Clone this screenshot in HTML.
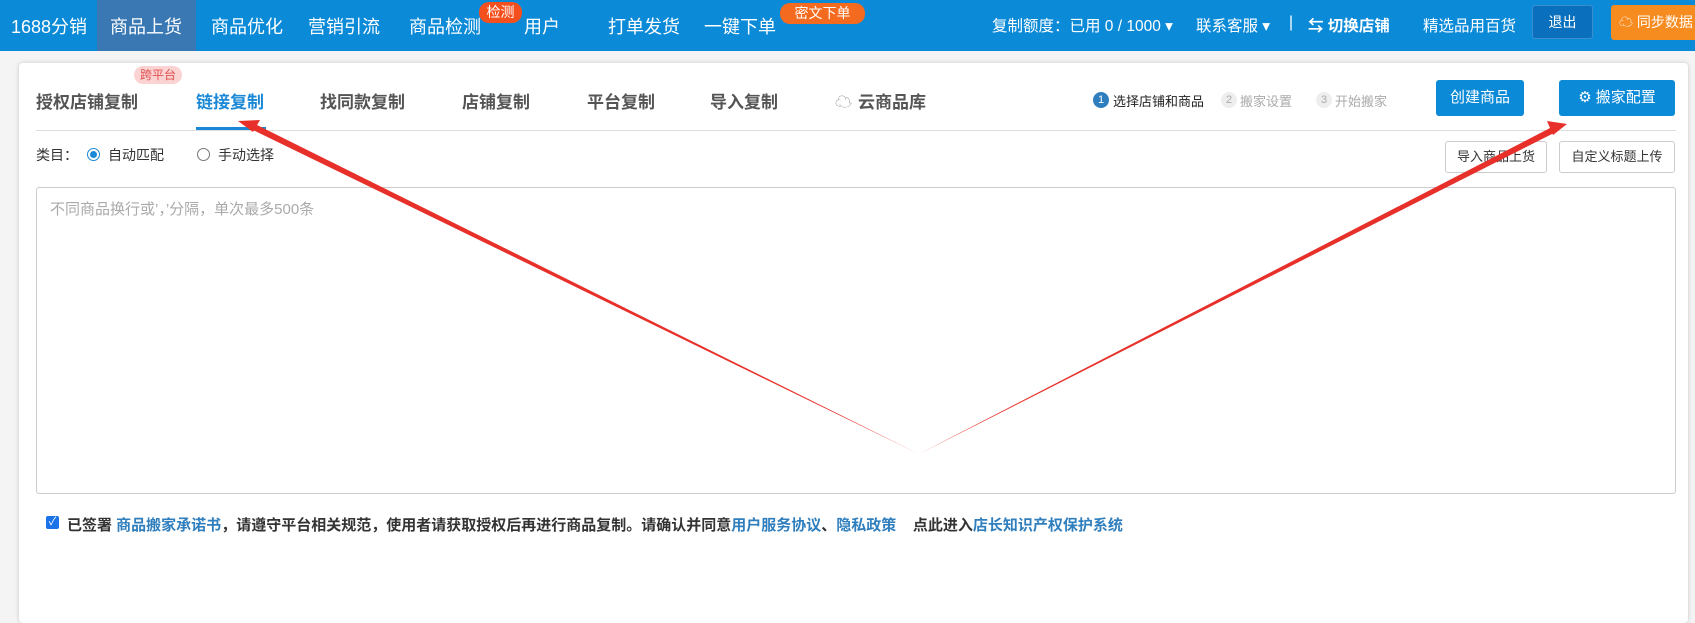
<!DOCTYPE html>
<html><head><meta charset="utf-8"><style>
*{margin:0;padding:0;box-sizing:border-box}
body{width:1695px;height:612px;overflow:hidden;background:#f4f4f4;font-family:"Liberation Sans","Noto Sans CJK SC",sans-serif;position:relative}
.a{position:absolute;white-space:nowrap}
.nav{position:absolute;left:0;top:0;width:1695px;height:51px;background:#0b8ad8}
.nv{position:absolute;top:13px;color:#fff;font-size:18px}
.rt{position:absolute;top:14px;color:#fff;font-size:15.5px}
.badge{position:absolute;background:#f4501e;color:#fff;font-size:14px;border-radius:10px;text-align:center;line-height:21px}
.card{position:absolute;left:19px;top:63px;width:1669px;height:560px;background:#fff;border-radius:4px;box-shadow:0 0 5px rgba(0,0,0,.18)}
.tab{position:absolute;top:88px;font-size:17px;font-weight:bold;color:#555}
.btn{position:absolute;background:#0b8ad8;color:#fff;font-size:15px;border-radius:3px;text-align:center}
.obtn{position:absolute;border:1px solid #ccc;background:#fff;color:#333;font-size:13px;border-radius:3px;text-align:center;line-height:30px}
.st{position:absolute;top:91px;font-size:13px}
.cir{position:absolute;top:92px;width:16px;height:16px;border-radius:50%;font-size:11px;text-align:center;line-height:16px}
.lk{color:#2f7ebd}
</style></head><body>
<div class="nav"></div>
<div class="a" style="left:97px;top:0;width:99px;height:51px;background:#3a78b3"></div>
<div class="nv" style="left:11px">1688分销</div>
<div class="nv" style="left:110px">商品上货</div>
<div class="nv" style="left:211px">商品优化</div>
<div class="nv" style="left:308px">营销引流</div>
<div class="nv" style="left:409px">商品检测</div>
<div class="badge" style="left:479px;top:2px;width:43px">检测</div>
<div class="nv" style="left:524px">用户</div>
<div class="nv" style="left:608px">打单发货</div>
<div class="nv" style="left:704px">一键下单</div>
<div class="badge" style="left:780px;top:3px;width:85px;background:#f46a1e">密文下单</div>
<div class="rt" style="left:992px">复制额度：已用 0 / 1000 ▾</div>
<div class="rt" style="left:1196px">联系客服 ▾</div>
<div class="rt" style="left:1289px">|</div>
<div class="rt" style="left:1308px;font-weight:bold">⇆ 切换店铺</div>
<div class="rt" style="left:1423px">精选品用百货</div>
<div class="a" style="left:1532px;top:5px;width:61px;height:34px;background:#0a70bd;border:1px solid #3b8fd0;border-radius:3px;color:#fff;font-size:14px;text-align:center;line-height:32px">退出</div>
<div class="a" style="left:1611px;top:5px;width:90px;height:35px;background:#f68b1f;border-radius:3px;color:#fff;font-size:14px;line-height:35px;padding-left:8px">☁ 同步数据</div>

<div class="card"></div>
<div class="a" style="left:134px;top:66px;width:48px;height:18px;background:#fbd3d3;color:#e05050;font-size:12px;border-radius:9px;text-align:center;line-height:18px">跨平台</div>
<div class="tab" style="left:36px">授权店铺复制</div>
<div class="tab" style="left:196px;color:#1a88d6">链接复制</div>
<div class="tab" style="left:320px">找同款复制</div>
<div class="tab" style="left:462px">店铺复制</div>
<div class="tab" style="left:587px">平台复制</div>
<div class="tab" style="left:710px">导入复制</div>
<div class="tab" style="left:835px;color:#999">☁</div>
<div class="tab" style="left:858px">云商品库</div>
<div class="a" style="left:36px;top:130px;width:1640px;height:1px;background:#ddd"></div>
<div class="a" style="left:196px;top:127px;width:70px;height:3px;background:#1a88d6"></div>
<div class="cir" style="left:1093px;background:#2f7ebd;color:#fff">1</div>
<div class="st" style="left:1113px;color:#222">选择店铺和商品</div>
<div class="cir" style="left:1221px;background:#eee;color:#aaa">2</div>
<div class="st" style="left:1240px;color:#aaa">搬家设置</div>
<div class="cir" style="left:1316px;background:#eee;color:#aaa">3</div>
<div class="st" style="left:1335px;color:#aaa">开始搬家</div>
<div class="btn" style="left:1436px;top:80px;width:88px;height:36px;line-height:36px">创建商品</div>
<div class="btn" style="left:1559px;top:80px;width:116px;height:36px;line-height:36px">⚙ 搬家配置</div>

<div class="a" style="left:36px;top:145px;font-size:14px;color:#333">类目：</div>
<div class="a" style="left:87px;top:148px;width:13px;height:13px;border:1px solid #1a88d6;border-radius:50%"><div style="margin:2px;width:7px;height:7px;border-radius:50%;background:#1a88d6"></div></div>
<div class="a" style="left:108px;top:145px;font-size:14px;color:#333">自动匹配</div>
<div class="a" style="left:197px;top:148px;width:13px;height:13px;border:1px solid #777;border-radius:50%"></div>
<div class="a" style="left:218px;top:145px;font-size:14px;color:#333">手动选择</div>
<div class="obtn" style="left:1445px;top:141px;width:102px;height:32px">导入商品上货</div>
<div class="obtn" style="left:1559px;top:141px;width:116px;height:32px">自定义标题上传</div>
<div class="a" style="left:36px;top:187px;width:1640px;height:307px;border:1px solid #ccc;border-radius:3px"></div>
<div class="a" style="left:50px;top:198px;font-size:15px;color:#aaa">不同商品换行或’，’分隔，单次最多500条</div>
<div class="a" style="left:46px;top:516px;width:13px;height:13px;background:#1a73e8;border-radius:2px;color:#fff;font-size:11px;line-height:13px;text-align:center">✓</div>
<div class="a" style="left:67px;top:514px;font-size:15px;font-weight:bold;color:#333">已签署 <span class="lk">商品搬家承诺书</span>，请遵守平台相关规范，使用者请获取授权后再进行商品复制。请确认并同意<span class="lk">用户服务协议</span>、<span class="lk">隐私政策</span>&nbsp;&nbsp;&nbsp; 点此进入<span class="lk">店长知识产权保护系统</span></div>

<svg class="a" style="left:0;top:0" width="1695" height="612">
<polygon points="919,454 255,124 253,130" fill="#e8302a"/>
<polygon points="238,121 260,120 253,132" fill="#e8302a"/>
<polygon points="919,454 1552,127 1554,133" fill="#e8302a"/>
<polygon points="1567,124 1547,121 1553,135" fill="#e8302a"/>
</svg>
</body></html>
